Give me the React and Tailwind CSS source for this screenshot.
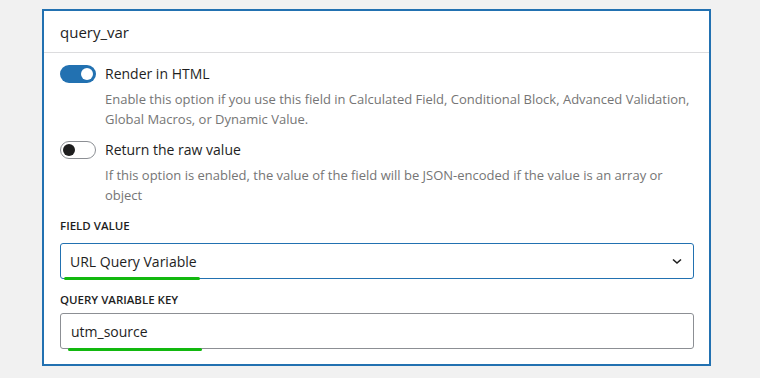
import React from "react";

const font = { fontFamily: '"Open Sans", "Noto Sans", sans-serif' };

function Toggle({ on }) {
  if (on) {
    return (
      <span className="relative mt-[1px] inline-block h-[18px] w-[36px] shrink-0 rounded-full bg-[#2271b1]">
        <span className="absolute right-[3px] top-[3px] h-[12px] w-[12px] rounded-full bg-white" />
      </span>
    );
  }
  return (
    <span className="relative mt-[1px] inline-block h-[18px] w-[36px] shrink-0 rounded-full border border-[#8c8f94] bg-white">
      <span className="absolute left-[2px] top-[2px] h-[12px] w-[12px] rounded-full bg-[#1e1e1e]" />
    </span>
  );
}

function ToggleRow({ on, label, children }) {
  return (
    <div className="flex items-start gap-[9px]">
      <Toggle on={on} />
      <div>
        <div className="text-[14px] leading-[20px] text-[#1e1e1e]">{label}</div>
        <p className="mt-[5px] text-[13px] leading-[20px] text-[#757575]">{children}</p>
      </div>
    </div>
  );
}

export default function App() {
  return (
    <div className="min-h-[378px] bg-[#f1f1f1] pl-[42px] pt-[9px]" style={font}>
      <div className="h-[357px] w-[669px] border-2 border-[#2271b1] bg-white">
        <div className="flex h-[42px] items-center border-b border-[#dcdcde] px-[16px] pt-[1px] text-[15px] text-[#1e1e1e]">
          query_var
        </div>
        <div className="px-[16px] pt-[11px]">
          <ToggleRow on label="Render in HTML">
            Enable this option if you use this field in Calculated Field, Conditional Block, Advanced Validation,
            Global Macros, or Dynamic Value.
          </ToggleRow>
          <div className="mt-[11px]">
            <ToggleRow label="Return the raw value">
              If this option is enabled, the value of the field will be JSON-encoded if the value is an array or
              object
            </ToggleRow>
          </div>

          <div className="mt-[13px] text-[11.5px] font-semibold uppercase leading-[16px] text-[#1e1e1e]">
            Field Value
          </div>
          <div className="relative mt-[9px]">
            <div className="flex h-[36px] w-[634px] items-center justify-between rounded-[3px] border border-[#2271b1] pl-[9px] pr-[10px] text-[14px] text-[#1e1e1e]">
              <span>URL Query Variable</span>
              <svg width="12" height="12" viewBox="0 0 12 12" fill="none">
                <path d="M2 4.5 L6 8 L10 4.5" stroke="#1e1e1e" strokeWidth="1.6" />
              </svg>
            </div>
            <span className="absolute left-[4px] top-[34px] h-[3px] w-[136px] rounded-full bg-[#12b80f]" />
          </div>

          <div className="mt-[13px] text-[11.5px] font-semibold uppercase leading-[16px] text-[#1e1e1e]">
            Query Variable Key
          </div>
          <div className="relative mt-[5px]">
            <div className="flex h-[36px] w-[634px] items-center rounded-[3px] border border-[#8c8f94] pl-[10px] text-[14px] text-[#1e1e1e]">
              utm_source
            </div>
            <span className="absolute left-[8px] top-[35px] h-[3px] w-[134px] rounded-full bg-[#12b80f]" />
          </div>
        </div>
      </div>
    </div>
  );
}
